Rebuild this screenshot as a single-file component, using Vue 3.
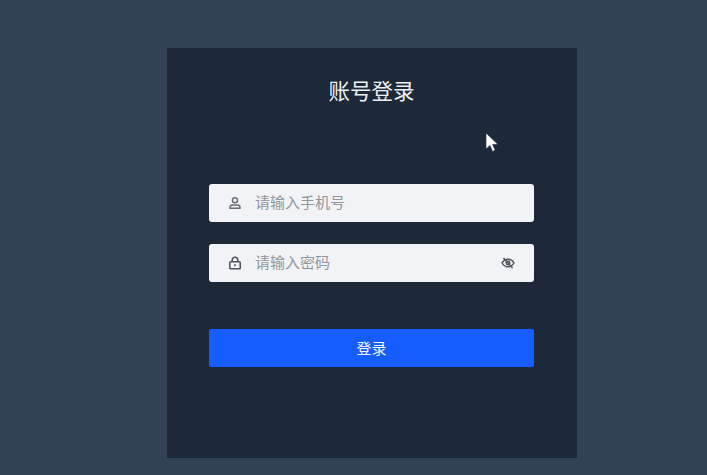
<script setup>
const phonePlaceholder = '请输入手机号'
const passwordPlaceholder = '请输入密码'
</script>

<template>
  <div class="page">
    <div class="card">
      <h1 class="title">账号登录</h1>
      <div class="form">
        <div class="field first">
          <svg class="icon" viewBox="0 0 16 16" fill="none" stroke="#6a7079" stroke-width="1.7">
            <circle cx="8" cy="4.800" r="2.900" />
            <path d="M2.300 14v-.8c0-1.800 1.300-2.800 2.900-2.800h5.600c1.600 0 2.900 1 2.900 2.800v.8z" />
          </svg>
          <span class="placeholder">{{ phonePlaceholder }}</span>
        </div>
        <div class="field second">
          <svg class="icon" viewBox="0 0 16 16" fill="none" stroke="#52585f" stroke-width="1.800">
            <rect x="2" y="6.600" width="12" height="8" rx="1" />
            <path d="M4.800 6.600V4.600a3.200 3.200 0 0 1 6.400 0v2" />
            <path d="M8 9.400v2.200" />
          </svg>
          <span class="placeholder">{{ passwordPlaceholder }}</span>
          <svg class="icon eye" viewBox="0 0 16 16" fill="none" stroke="#4f555c" stroke-width="1.700">
            <path d="M1.200 8C2.700 5.200 5.100 3.700 8 3.700s5.300 1.500 6.800 4.300c-1.500 2.800-3.900 4.300-6.800 4.300S2.700 10.800 1.200 8z" />
            <circle cx="8" cy="8" r="2" />
            <path d="M2.800 2.200l10.400 11.600" />
          </svg>
        </div>
        <button class="submit" type="button"><span class="label">登录</span></button>
      </div>
    </div>
    <svg class="cursor" viewBox="0 0 14 22">
      <path d="M1 1v16l4-3.600 2.600 6 2.600-1.100-2.600-5.900h5.400z" fill="#fff" stroke="#1c2738" stroke-width=".6" />
    </svg>
  </div>
</template>

<style>
html, body { margin: 0; background: #334155; }
</style>

<style scoped>
.page {
  position: relative;
  width: 707px;
  height: 475px;
  box-sizing: border-box;
  padding: 48px 0 0 167px;
  overflow: hidden;
  background: #334155;
  font-family: "Noto Sans CJK SC", "Liberation Sans", sans-serif;
}
.card {
  width: 410px;
  height: 410px;
  box-sizing: border-box;
  padding: 26px 43px 0 42px;
  background: #1d2839;
}
.title {
  margin: 0;
  height: 32px;
  line-height: 32px;
  text-align: center;
  font-size: 21.500px;
  font-weight: 400;
  color: #eef1f4;
}
.form {
  display: flex;
  flex-direction: column;
  margin-top: 78px;
}
.field {
  display: flex;
  align-items: center;
  height: 38px;
  box-sizing: border-box;
  padding: 0 19px;
  background: #f1f3f6;
  border-radius: 3px;
}
.second { margin-top: 22px; }
.icon {
  width: 14px;
  height: 14px;
  flex: none;
}
.placeholder {
  margin-left: 13px;
  font-size: 15px;
  line-height: 20px;
  color: #92969d;
  transform: translateY(-1px);
}
.eye {
  margin-left: auto;
  margin-right: 0;
}
.submit {
  height: 38px;
  margin-top: 47px;
  padding: 0;
  border: 0;
  border-radius: 2px;
  background: #165dff;
  color: #f2f6ff;
  font-family: inherit;
  font-size: 15px;
}
.label {
  display: block;
  transform: translateY(-1px);
}
.cursor {
  position: absolute;
  left: 485px;
  top: 132px;
  width: 14px;
  height: 22px;
}
</style>
